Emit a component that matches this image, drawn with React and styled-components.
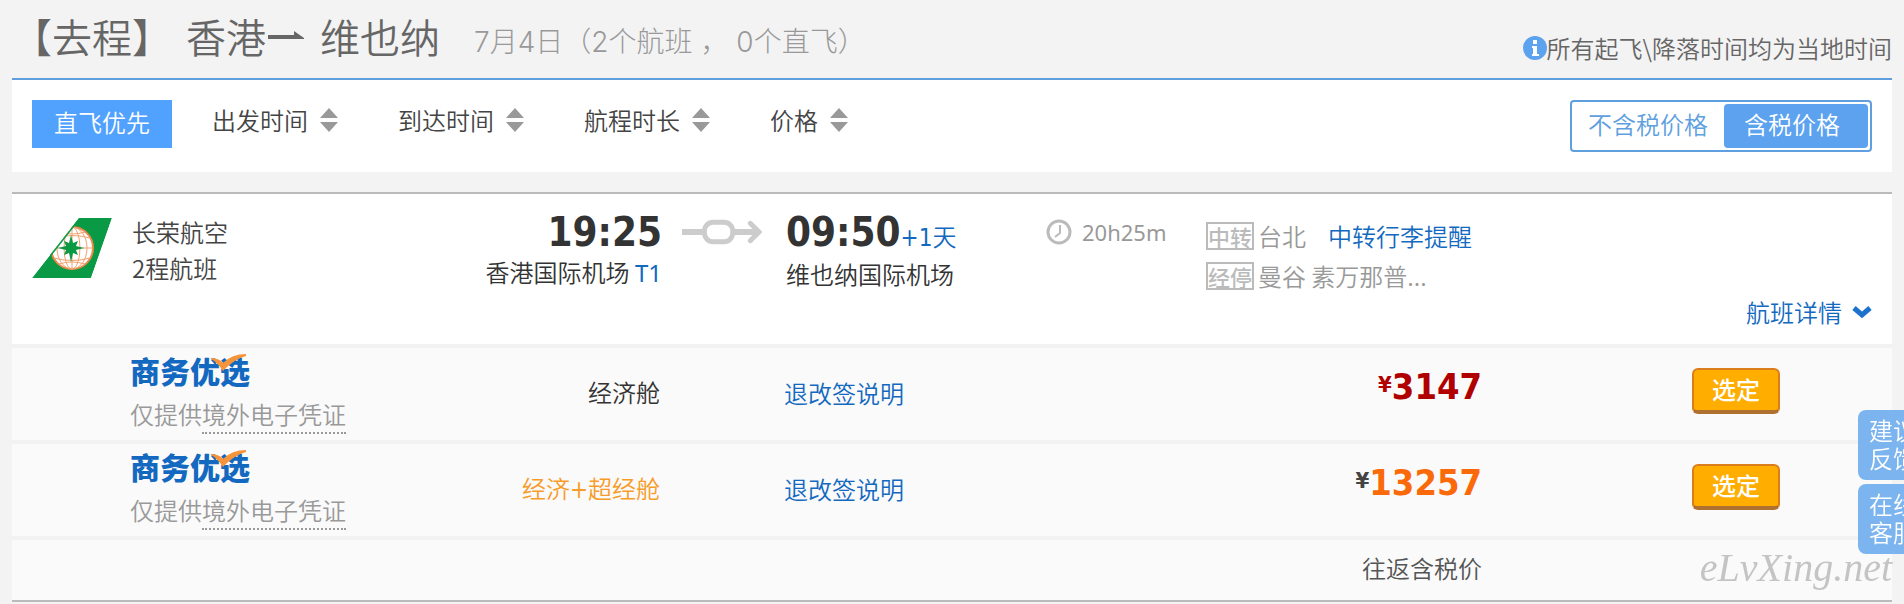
import React, { useState } from "react";
import styled, { createGlobalStyle } from "styled-components";

const GlobalStyle = createGlobalStyle`
  * {
    box-sizing: border-box;
  }

  body {
    margin: 0;
    background: #f3f3f3;
    color: #444;
    font-family: "Noto Sans CJK SC", sans-serif;
    font-size: 24px;
    font-weight: 350;
    line-height: 36px;
  }

  button {
    font: inherit;
    cursor: pointer;
  }

  h1, p, ul {
    margin: 0;
    padding: 0;
  }
`;

const NUMBER_FONT = '"DejaVu Sans Condensed", "DejaVu Sans"';
const COLUMNS = "330fr 300fr 124fr 260fr";

const Page = styled.main`
  padding: 0 12px;
  overflow: hidden;
`;

const Header = styled.header`
  display: flex;
  justify-content: space-between;
  align-items: flex-end;
  height: 80px;
  border-bottom: 2px solid #609fdf;
`;

const Title = styled.h1`
  display: flex;
  align-items: center;
  gap: 14px;
  padding-bottom: 14px;
  color: #666;
  font-size: 40px;
  font-weight: 350;
  line-height: 56px;
`;

const Route = styled.span`
  display: flex;
  align-items: center;

  svg {
    margin-right: 14px;
  }
`;

const Summary = styled.span`
  padding: 12px 0 0 20px;
  color: #999;
  font-family: Inter, "Noto Sans CJK SC", sans-serif;
  font-size: 28px;
  font-weight: 300;
  line-height: 36px;
`;

const Comma = styled.span`
  padding-left: 8px;
`;

const Note = styled.p`
  display: flex;
  align-items: center;
  padding-bottom: 12px;
  color: #666;
`;

const Filters = styled.div`
  display: flex;
  align-items: flex-start;
  justify-content: space-between;
  height: 92px;
  padding: 20px;
  background: #fff;
`;

const SortList = styled.div`
  display: flex;
  gap: 60px;
`;

const DirectButton = styled.button`
  width: 140px;
  height: 48px;
  margin-right: -20px;
  padding: 0 0 4px;
  border: 0;
  background: #51a1ff;
  color: #fff;
`;

const SortButton = styled.button`
  display: flex;
  align-items: center;
  gap: 12px;
  height: 40px;
  padding: 0;
  border: 0;
  background: none;
  color: #444;
`;

const TaxToggle = styled.div`
  display: flex;
  height: 52px;
  padding: 2px;
  border: 2px solid #609fdf;
  border-radius: 4px;
`;

const TaxOption = styled.button`
  padding: ${(props) => (props.$active ? "0 28px 4px 20px" : "0 16px 4px 14px")};
  border: 0;
  border-radius: 4px;
  background: ${(props) => (props.$active ? "#5ca2ef" : "none")};
  color: ${(props) => (props.$active ? "#fff" : "#609fdf")};
`;

const Card = styled.section`
  margin-top: 20px;
  border-top: 2px solid #bbb;
  border-bottom: 2px solid #bbb;
`;

const Flight = styled.div`
  display: grid;
  grid-template-columns: ${COLUMNS} 160fr 666fr;
  height: 150px;
  padding: 16px 20px 0;
  background: #fff;
`;

const Airline = styled.div`
  display: flex;
  gap: 20px;
  align-items: flex-start;
  padding-top: 4px;

  svg {
    margin-top: 4px;
  }
`;

const Stop = styled.div`
  text-align: ${(props) => (props.$right ? "right" : "left")};
  white-space: nowrap;
  color: #333;
`;

const Time = styled.time`
  font-family: ${NUMBER_FONT}, sans-serif;
  font-size: 40px;
  font-weight: bold;
  line-height: 44px;
`;

const Terminal = styled.span`
  color: #1369c0;
  font-family: "Noto Sans", sans-serif;
  font-weight: 400;
`;

const DayShift = styled.span`
  color: #1369c0;
  font-family: ${NUMBER_FONT}, "Noto Sans CJK SC", sans-serif;
`;

const Connector = styled.div`
  padding: 8px 0 0 20px;
  height: 40px;
`;

const Duration = styled.div`
  display: flex;
  align-items: center;
  gap: 10px;
  height: 44px;
  color: #999;
  font-family: "Noto Sans", sans-serif;
  font-size: 22px;
  font-weight: 400;
`;

const Transfer = styled.div`
  display: flex;
  flex-direction: column;
  padding-top: 6px;
  color: #999;
`;

const TransferRow = styled.div`
  display: flex;
  align-items: center;
  gap: 4px;
  height: 40px;

  a {
    margin-left: 18px;
  }
`;

const Tag = styled.span`
  width: 48px;
  height: 28px;
  border: 2px solid #bbb;
  color: #bbb;
  font-size: 22px;
  font-weight: 500;
  line-height: 24px;
`;

const Link = styled.a`
  color: #1369c0;
  text-decoration: none;
`;

const DetailButton = styled.button`
  display: flex;
  align-items: center;
  align-self: flex-end;
  gap: 10px;
  height: 32px;
  padding: 0;
  border: 0;
  background: none;
  color: #1369c0;
`;

const FareList = styled.ul`
  list-style: none;
`;

const Fare = styled.li`
  display: grid;
  grid-template-columns: ${COLUMNS} 436fr 118fr 272fr;
  align-items: center;
  height: ${(props) => (props.$footer ? "64px" : "96px")};
  padding: 0 20px ${(props) => (props.$footer ? "4px" : "0")};
  border-top: 4px solid #f2f2f2;
  background: #fafafa;
`;

const Product = styled.div`
  align-self: start;
  padding: 2px 0 0 98px;
  color: #999;
  white-space: nowrap;
`;

const Brand = styled.div`
  position: relative;
  width: 120px;
  height: 46px;
  color: #1369c0;
  font-size: 30px;
  font-weight: 900;
  line-height: 40px;

  svg {
    position: absolute;
    top: 4px;
    left: 80px;
  }
`;

const Dotted = styled.span`
  display: inline-block;
  height: 38px;
  border-bottom: 2px dotted #999;
`;

const Cabin = styled.div`
  padding-right: 2px;
  text-align: right;
  color: ${(props) => (props.$premium ? "#f79c28" : "#333")};
  font-family: ${NUMBER_FONT}, "Noto Sans CJK SC", sans-serif;
`;

const Rules = styled(Link)`
  grid-column: 4;
  margin-left: -2px;
  padding-bottom: 2px;
`;

const Price = styled.div`
  display: flex;
  justify-content: flex-end;
  align-items: flex-start;
  padding-bottom: 14px;
  color: ${(props) => props.$color};
  font-family: ${NUMBER_FONT}, sans-serif;
  font-size: 36px;
  font-weight: bold;
`;

const Currency = styled.span`
  color: ${(props) => props.$color};
  font-size: 22px;
  line-height: 32px;
`;

const SelectButton = styled.button`
  grid-column: 7;
  justify-self: center;
  width: 88px;
  height: 46px;
  margin-bottom: 6px;
  padding: 0 0 2px;
  border: 2px solid #d97e1a;
  border-bottom: 4px solid #b07030;
  border-radius: 6px;
  background: #ffae00;
  color: #fff;
  font-weight: 500;
`;

const TotalLabel = styled.span`
  grid-column: 5;
  text-align: right;
  color: #555;
`;

const SideBar = styled.div`
  position: fixed;
  top: 410px;
  right: -24px;
  display: flex;
  flex-direction: column;
  gap: 4px;
`;

const SideButton = styled.button`
  width: 70px;
  height: 70px;
  padding: 0 0 2px;
  border: 0;
  border-radius: 8px;
  background: #7bb4ef;
  color: #fff;
  line-height: 28px;
`;

const Watermark = styled.div`
  position: absolute;
  top: 546px;
  right: 12px;
  color: #c4c4c4;
  font-family: "Liberation Serif", serif;
  font-size: 40px;
  font-style: italic;
  font-weight: 400;
  line-height: 44px;
`;

const RouteArrow = () => (
  <svg width="40" height="40" viewBox="0 0 40 40">
    <path d="M2 19h26v-4l10 7v1H2z" fill="#666" />
  </svg>
);

const InfoIcon = () => (
  <svg width="24" height="24" viewBox="0 0 24 24">
    <circle cx="12" cy="12" r="12" fill="#5ca2ef" />
    <path d="M10 4h4v4h-4zM9 10h5v8h2v2H9v-2h1v-6H9z" fill="#fff" />
  </svg>
);

const SortIcon = () => (
  <svg width="18" height="24" viewBox="0 0 18 24">
    <path d="M9 0l9 10H0zM9 24l9-10H0z" fill="#999" />
  </svg>
);

const AirlineLogo = () => (
  <svg width="80" height="60" viewBox="0 0 80 60">
    <defs>
      <clipPath id="tail">
        <path d="M47 0h33L59 60H0z" />
      </clipPath>
    </defs>
    <g clipPath="url(#tail)">
      <path d="M47 0h33L59 60H0z" fill="#0a9a46" />
      <circle cx="40" cy="30" r="21" fill="#fff" stroke="#ec8a4e" strokeWidth="2" />
      <g fill="none" stroke="#f0a06c" strokeWidth="1">
        <ellipse cx="40" cy="30" rx="8" ry="21" />
        <ellipse cx="40" cy="30" rx="15" ry="21" />
        <path d="M40 9v42M19 30h42M22 20q18-5 36 0M22 40q18 5 36 0M27 14q13 4 26 0M27 46q13-4 26 0" />
      </g>
      <path d="M39 17l2 8 5-2-2 5 8 2-8 2 2 5-5-2-2 9-2-9-5 2 2-5-8-2 8-2-2-5 5 2z" fill="#0a9a46" />
      <path d="M47 0L18 37" stroke="#0a9a46" strokeWidth="3" />
    </g>
  </svg>
);

const ConnectorIcon = () => (
  <svg width="80" height="28" viewBox="0 0 82 28" fill="none" stroke="#ccc">
    <path d="M0 14h21M54 14h22" strokeWidth="6" />
    <rect x="23" y="4" width="29" height="20" rx="9" strokeWidth="5" />
    <path d="M70 5l9 9-9 9" strokeWidth="5" strokeLinecap="round" />
  </svg>
);

const ClockIcon = () => (
  <svg width="26" height="26" viewBox="0 0 26 26" fill="none" stroke="#bbb" strokeWidth="3">
    <circle cx="13" cy="13" r="11" />
    <path d="M14 6v8l-5 4" strokeWidth="2" />
  </svg>
);

const ChevronIcon = () => (
  <svg width="20" height="14" viewBox="0 0 20 14" fill="none" stroke="#1c72cc" strokeWidth="5">
    <path d="M2 3l8 7 8-7" />
  </svg>
);

const CheckIcon = () => (
  <svg width="36" height="18" viewBox="0 0 36 18">
    <path d="M0 4q9 0 13 5Q22 0 36 0v2Q24 5 13 17 8 9 0 4z" fill="#f7943a" />
  </svg>
);

const sorts = ["出发时间", "到达时间", "航程时长", "价格"];

const fares = [
  { cabin: "经济舱", price: 3147, color: "#b00000", currency: "#b00000" },
  { cabin: "经济+超经舱", premium: true, price: 13257, color: "#fa6a0a", currency: "#444" },
];

function App() {
  const [withTax, setWithTax] = useState(true);

  return (
    <Page>
      <GlobalStyle />
      <Header>
        <Title>
          <span>【去程】</span>
          <Route>香港<RouteArrow />维也纳</Route>
          <Summary>7月4日（2个航班<Comma>，</Comma> 0个直飞）</Summary>
        </Title>
        <Note><InfoIcon />所有起飞\降落时间均为当地时间</Note>
      </Header>

      <Filters>
        <SortList>
          <DirectButton>直飞优先</DirectButton>
          {sorts.map((name) => (
            <SortButton key={name}>{name}<SortIcon /></SortButton>
          ))}
        </SortList>
        <TaxToggle>
          <TaxOption $active={!withTax} aria-pressed={!withTax} onClick={() => setWithTax(false)}>
            不含税价格
          </TaxOption>
          <TaxOption $active={withTax} aria-pressed={withTax} onClick={() => setWithTax(true)}>
            含税价格
          </TaxOption>
        </TaxToggle>
      </Filters>

      <Card>
        <Flight>
          <Airline>
            <AirlineLogo />
            <div>
              <p>长荣航空</p>
              <p>2程航班</p>
            </div>
          </Airline>
          <Stop $right>
            <Time>19:25</Time>
            <p>香港国际机场 <Terminal>T1</Terminal></p>
          </Stop>
          <Connector><ConnectorIcon /></Connector>
          <Stop>
            <Time>09:50</Time><DayShift>+1天</DayShift>
            <p>维也纳国际机场</p>
          </Stop>
          <Duration><ClockIcon />20h25m</Duration>
          <Transfer>
            <TransferRow>
              <Tag>中转</Tag>台北
              <Link href="#luggage">中转行李提醒</Link>
            </TransferRow>
            <TransferRow><Tag>经停</Tag>曼谷 素万那普...</TransferRow>
            <DetailButton>航班详情<ChevronIcon /></DetailButton>
          </Transfer>
        </Flight>

        <FareList>
          {fares.map((fare) => (
            <Fare key={fare.price}>
              <Product>
                <Brand>商务优选<CheckIcon /></Brand>
                <p>仅提供<Dotted>境外电子凭证</Dotted></p>
              </Product>
              <Cabin $premium={fare.premium}>{fare.cabin}</Cabin>
              <Rules href="#rules">退改签说明</Rules>
              <Price $color={fare.color}>
                <Currency $color={fare.currency}>¥</Currency>{fare.price}
              </Price>
              <SelectButton>选定</SelectButton>
            </Fare>
          ))}
          <Fare $footer>
            <TotalLabel>往返含税价</TotalLabel>
          </Fare>
        </FareList>
      </Card>

      <SideBar>
        <SideButton>建议<br />反馈</SideButton>
        <SideButton>在线<br />客服</SideButton>
      </SideBar>
      <Watermark>eLvXing.net</Watermark>
    </Page>
  );
}

export default App;
